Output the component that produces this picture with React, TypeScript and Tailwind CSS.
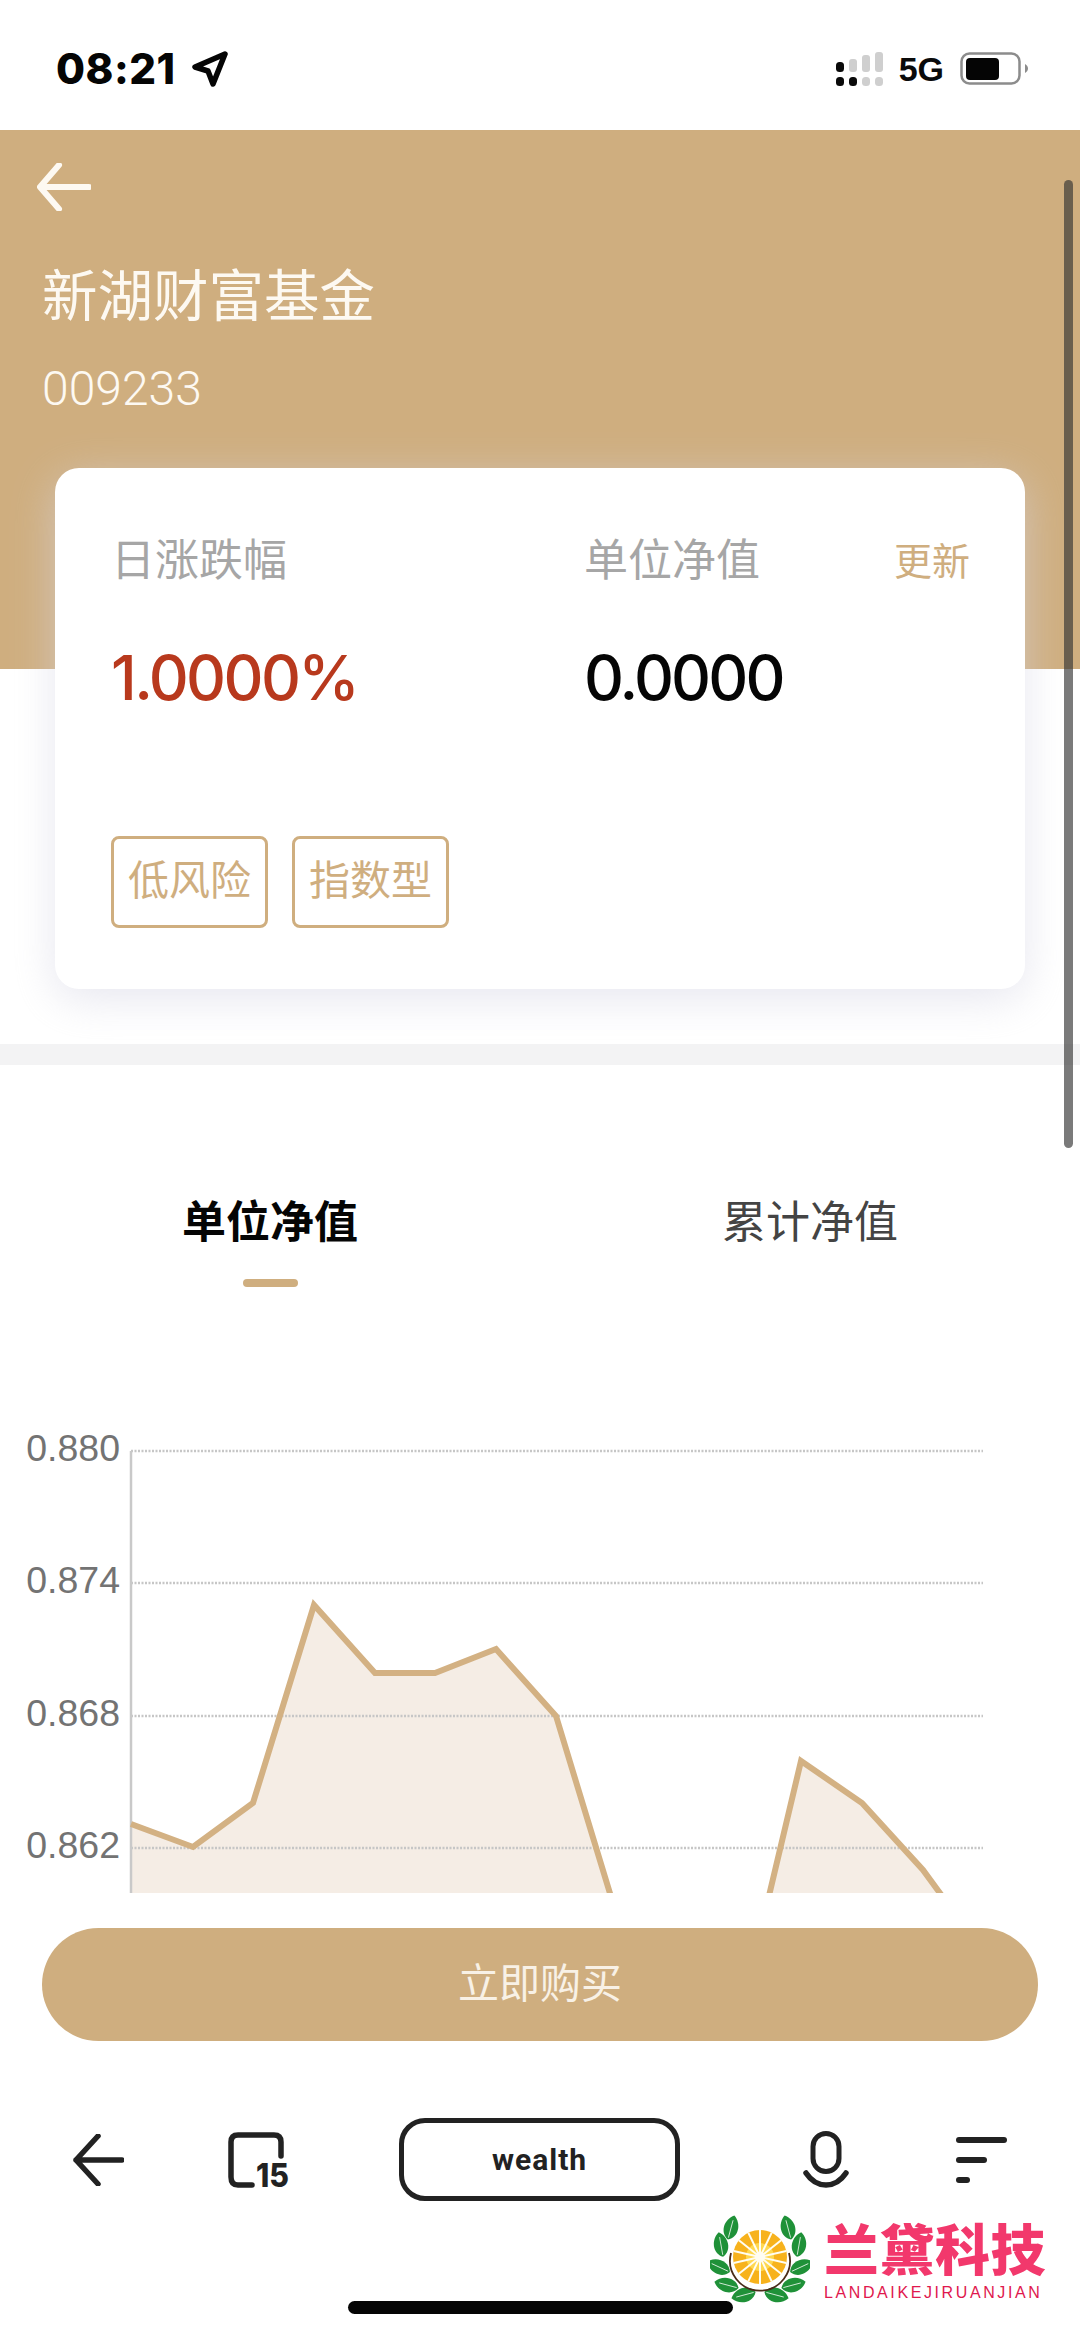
const cjk = { fontFamily: '"Liberation Sans", "Noto Sans CJK SC", sans-serif' };

function Signal() {
  return (
    <svg width="48" height="34" viewBox="0 0 48 34" className="block">
      <rect x="1" y="10" width="8" height="10" rx="3.5" fill="#0a0a0a" />
      <rect x="1" y="25" width="8" height="9" rx="3.5" fill="#0a0a0a" />
      <rect x="14" y="7" width="8" height="13" rx="3" fill="#cfcfcf" />
      <rect x="14" y="25" width="8" height="9" rx="3.5" fill="#0a0a0a" />
      <rect x="27" y="3" width="8" height="17" rx="3" fill="#cfcfcf" />
      <rect x="27" y="25" width="8" height="9" rx="3.5" fill="#cfcfcf" />
      <rect x="40" y="0" width="8" height="20" rx="3" fill="#cfcfcf" />
      <rect x="40" y="25" width="8" height="9" rx="3.5" fill="#cfcfcf" />
    </svg>
  );
}

function Battery() {
  return (
    <svg width="69" height="33" viewBox="0 0 69 33" className="block">
      <rect x="1.5" y="1.5" width="58" height="30" rx="8" fill="none" stroke="#8c8c8c" strokeWidth="2.5" />
      <rect x="6" y="6" width="33" height="22" rx="4" fill="#050505" />
      <path d="M65 12c2 1 3 3 3 4.500s-1 3.500-3 4.500z" fill="#8c8c8c" />
    </svg>
  );
}

function Logo() {
  const leaves = [
    [51, -22, 15], [108, -22, -15], [41, -5, -10], [119, -5, 10], [39, 17, -65], [121, 17, 65],
    [47, 35, -75], [113, 35, 75], [64, 45, -105], [96, 45, 105],
  ];
  const spokes = Array.from({ length: 14 }, (_, i) => (i * 360) / 14);
  return (
    <svg width="100" height="88" viewBox="30 -35 100 88" className="block">
      {leaves.map(([x, y, r], i) => (
        <g key={i} transform={`translate(${x} ${y}) rotate(${r})`}>
          <path d="M0 -13C9 -7 10 7 0 12C-10 7 -9 -7 0 -13Z" fill="#1f9138" />
          <path d="M0 -8V10" stroke="#e8f5ea" strokeWidth="0.8" />
        </g>
      ))}
      <circle cx="80" cy="7" r="27" fill="#f7b21c" />
      <circle cx="80" cy="7" r="14" fill="#ffd84f" />
      {spokes.map((a, i) => (
        <line key={i} x1="80" y1="7" x2="80" y2="-20" stroke="#fffdf2" strokeWidth="2" transform={`rotate(${a} 80 7)`} />
      ))}
      <circle cx="80" cy="7" r="5" fill="#fffdf2" />
      <path d="M51 3A30 30 0 1 0 109 3" fill="none" stroke="#4a2c1a" strokeWidth="1.800" />
    </svg>
  );
}

export default function App() {
  const line = 'M131 1824L193 1847L253 1803L314 1605L375 1673L435 1673L496 1649L556 1716L612 1900';
  const line2 = 'M768 1900L801 1761L862 1803L923 1870L945 1900';
  return (
    <div className="relative w-[1080px] h-[2337px] overflow-hidden bg-white" style={cjk}>
      {/* Status bar */}
      <div className="h-[130px] flex items-center pl-[56px] pr-[51px] pt-[7px]">
        <span className="text-[42px] leading-none font-extrabold text-[#050505] tracking-[0.5px]" style={{ fontFamily: 'Inter, sans-serif' }}>
          08:21
        </span>
        <svg width="36" height="36" viewBox="0 0 36 36" className="ml-[16px]">
          <path d="M33 3L3 16L16 20L21 33Z" fill="none" stroke="#050505" strokeWidth="5.500" strokeLinejoin="round" />
        </svg>
        <div className="ml-auto flex items-center">
          <Signal />
          <span className="ml-[16px] text-[34px] leading-none font-bold text-[#0a0a0a]">5G</span>
          <div className="ml-[16px]">
            <Battery />
          </div>
        </div>
      </div>

      {/* Header */}
      <div className="h-[539px] bg-[#cfae7f] px-[42px] pt-[33px] text-[#fdf9f2]">
        <svg width="54" height="48" viewBox="0 0 54 48" className="block -ml-[5px]">
          <path d="M52 24H4M22 2L3 24L22 46" fill="none" stroke="#fdf9f2" strokeWidth="6" strokeLinecap="round" strokeLinejoin="round" />
        </svg>
        <div className="mt-[56px] h-[60px] text-[55.500px] leading-[60px]">新湖财富基金</div>
        <div className="mt-[37px] h-[50px] text-[48px] leading-[50px] font-light" style={{ fontFamily: 'Roboto, sans-serif' }}>
          009233
        </div>
      </div>

      {/* Card */}
      <div className="relative mx-[55px] -mt-[201px] h-[521px] rounded-[24px] bg-white pt-[63px] pl-[56px] pr-[55px] shadow-[0_10px_44px_rgba(214,214,228,0.6)]">
        <div className="flex">
          <div className="w-[473px]">
            <div className="h-[60px] text-[44px] leading-[60px] text-[#a6a6a6]">日涨跌幅</div>
            <div className="mt-[47px] h-[80px] text-[62px] leading-[80px] font-medium tracking-[-2.600px] text-[#b8391d]" style={{ fontFamily: 'Inter, sans-serif' }}>
              1.0000%
            </div>
          </div>
          <div className="flex-1">
            <div className="flex justify-between h-[60px]">
              <span className="text-[44px] leading-[60px] text-[#a6a6a6]">单位净值</span>
              <span className="pt-[1px] text-[38px] leading-[60px] text-[#cfae7f]">更新</span>
            </div>
            <div className="mt-[47px] h-[80px] text-[62px] leading-[80px] font-medium tracking-[-2.800px] text-[#050505]" style={{ fontFamily: 'Inter, sans-serif' }}>
              0.0000
            </div>
          </div>
        </div>
        <div className="mt-[118px] flex gap-[24px]">
          <div className="w-[157px] h-[92px] flex items-center justify-center rounded-[8px] border-[3px] border-[#cfae7f] text-[41px] text-[#cfae7f]">低风险</div>
          <div className="w-[157px] h-[92px] flex items-center justify-center rounded-[8px] border-[3px] border-[#cfae7f] text-[41px] text-[#cfae7f]">指数型</div>
        </div>
      </div>

      {/* Divider */}
      <div className="mt-[55px] h-[21px] bg-[#f3f3f4]" />

      {/* Tabs */}
      <div className="grid grid-cols-2 pt-[128px]">
        <div className="flex flex-col items-center">
          <div className="h-[60px] text-[44px] leading-[60px] font-bold text-[#050505]">单位净值</div>
          <div className="mt-[26px] h-[8px] w-[55px] rounded-full bg-[#cfae7f]" />
        </div>
        <div className="flex flex-col items-center">
          <div className="h-[60px] text-[44px] leading-[60px] text-[#444444]">累计净值</div>
        </div>
      </div>

      {/* Chart */}
      <div className="mt-[98px] h-[508px] flex">
        <div className="w-[125px] pr-[5px] pt-[38px] shrink-0 flex flex-col gap-[82.500px]" style={{ fontFamily: '"Liberation Sans", sans-serif' }}>
          {['0.880', '0.874', '0.868', '0.862'].map((v) => (
            <div key={v} className="h-[50px] flex items-center justify-end text-[37.500px] text-[#737373]">
              {v}
            </div>
          ))}
        </div>
        <svg width="955" height="508" viewBox="125 1385 955 508" className="block shrink-0">
          <path d={`${line}H131Z`} fill="#f5ede5" />
          <path d={`${line2}Z`} fill="#f5ede5" />
          {[1451, 1583, 1716, 1848].map((y) => (
            <line key={y} x1="131" x2="983" y1={y} y2={y} stroke="#c6c6c6" strokeWidth="2.500" strokeDasharray="2 1.500" />
          ))}
          <line x1="131" x2="131" y1="1451" y2="1893" stroke="#c9c9c9" strokeWidth="2.500" />
          <path d={line} fill="none" stroke="#d3b183" strokeWidth="6" strokeLinejoin="miter" />
          <path d={line2} fill="none" stroke="#d3b183" strokeWidth="6" strokeLinejoin="miter" />
        </svg>
      </div>

      {/* Buy button */}
      <div className="mt-[35px] mx-[42px] h-[113px] rounded-full bg-[#cfae7f] flex items-center justify-center text-[41px] text-[#f8f1e6]">
        立即购买
      </div>

      {/* Browser bar */}
      <div className="mt-[77px] h-[83px] flex items-center pl-[73px]">
        <svg width="51" height="52" viewBox="0 0 51 52" className="block shrink-0">
          <path d="M49 26H3M25 2L3 26L25 50" fill="none" stroke="#222222" strokeWidth="5.500" strokeLinecap="round" strokeLinejoin="round" />
        </svg>
        <svg width="72" height="76" viewBox="0 0 72 76" className="block ml-[104px] mt-[20px] shrink-0">
          <path d="M53 24V10Q53 3 46 3H10Q3 3 3 10V45Q3 53 10 53H24" fill="none" stroke="#222222" strokeWidth="5.500" strokeLinecap="round" />
          <text x="28" y="55" fontSize="33" fontWeight="800" fill="#222222" textLength="33" lengthAdjust="spacingAndGlyphs" fontFamily="Inter, sans-serif">
            15
          </text>
        </svg>
        <div className="ml-[99px] w-[281px] h-[83px] shrink-0 rounded-[26px] border-[5.500px] border-[#222222] flex items-center justify-center text-[30px] font-bold tracking-[1px] text-[#222222]" style={{ fontFamily: 'Roboto, sans-serif' }}>
          wealth
        </div>
        <svg width="46" height="57" viewBox="0 0 46 57" className="block ml-[123px] shrink-0">
          <rect x="10" y="2.500" width="26" height="38" rx="13" fill="none" stroke="#222222" strokeWidth="5" />
          <path d="M3 42Q11 54 23 54Q35 54 43 42" fill="none" stroke="#222222" strokeWidth="5.500" strokeLinecap="round" />
        </svg>
        <div className="ml-[107px] w-[51px] flex flex-col gap-[14px] shrink-0">
          <div className="h-[6px] w-[51px] rounded-full bg-[#222222]" />
          <div className="h-[6px] w-[31px] rounded-full bg-[#222222]" />
          <div className="h-[6px] w-[14px] rounded-full bg-[#222222]" />
        </div>
      </div>

      {/* Home indicator */}
      <div className="mt-[100px] ml-[348px] h-[13px] w-[385px] rounded-full bg-[#050505]" />

      {/* Scrollbar */}
      <div className="absolute left-[1064px] top-[180px] h-[968px] w-[9px] rounded-full bg-[rgba(50,50,50,0.65)]" />

      {/* Watermark */}
      <div className="absolute left-[710px] top-[2215px] flex">
        <Logo />
        <div className="ml-[14px]">
          <div className="h-[62px] text-[55px] leading-[62px] font-black text-[#f2386c] whitespace-nowrap w-[222px] tracking-[0.5px]" style={{ fontFamily: '"Noto Sans CJK SC", sans-serif' }}>
            兰黛科技
          </div>
          <div className="mt-[8px] text-[16px] leading-[16px] tracking-[2.600px] text-[#e0184e] whitespace-nowrap">
            LANDAIKEJIRUANJIAN
          </div>
        </div>
      </div>
    </div>
  );
}
